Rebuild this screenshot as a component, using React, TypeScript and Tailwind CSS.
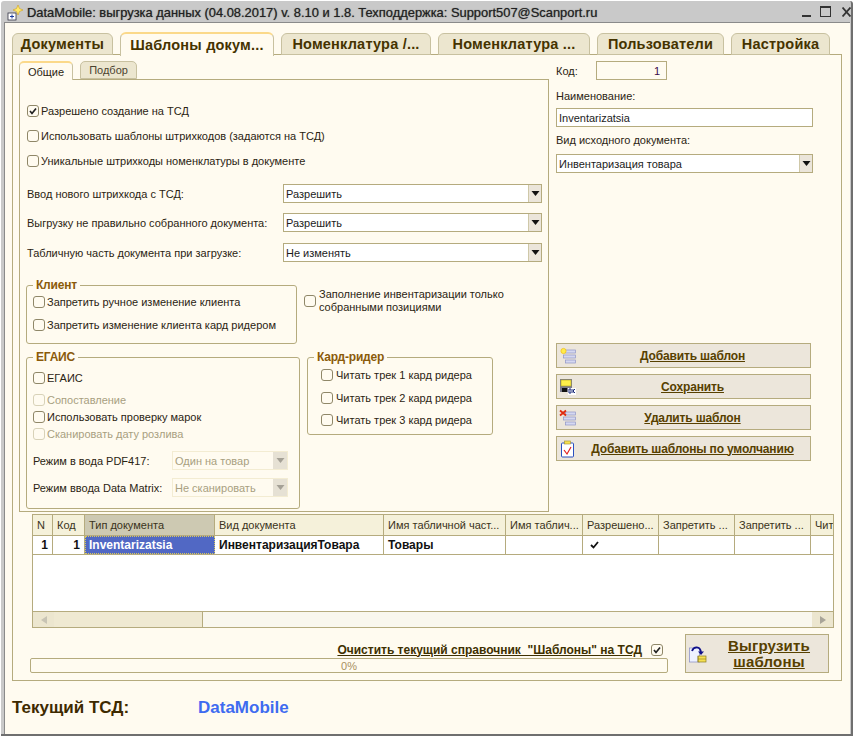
import type { ReactNode } from "react";

const tabs = [
  { label: "Документы", w: "w-[101px]" },
  { label: "Шаблоны докум...", w: "w-[154px]", active: true },
  { label: "Номенклатура /...", w: "w-[150px]" },
  { label: "Номенклатура ...", w: "w-[152px]" },
  { label: "Пользователи", w: "w-[127px]" },
  { label: "Настройка", w: "w-[99px]" },
];

const columns = [
  { title: "N", w: "w-[20px]" },
  { title: "Код", w: "w-[32px]" },
  { title: "Тип документа", w: "w-[130px]", sel: true },
  { title: "Вид документа", w: "w-[169px]" },
  { title: "Имя табличной част...", w: "w-[122px]" },
  { title: "Имя таблич...", w: "w-[77px]" },
  { title: "Разрешено...", w: "w-[76px]" },
  { title: "Запретить ...", w: "w-[76px]" },
  { title: "Запретить ...", w: "w-[76px]" },
  { title: "Чит", w: "w-[22px]" },
];

function Check({ on, off, label, gap = "ml-[2px]" }: { on?: boolean; off?: boolean; label?: ReactNode; gap?: string }) {
  return (
    <div className={`flex items-center ${off ? "text-[#a89f80]" : "text-[#2b2412]"}`}>
      <span className={`w-[12px] h-[12px] shrink-0 rounded-[3px] border bg-[#fffbf0] flex items-center justify-center ${off ? "border-[#d8d2b8]" : "border-[#8f8768]"}`}>
        {on && (
          <svg width="10" height="10" viewBox="0 0 10 10">
            <path d="M2 5 L4 7.5 L8 2.5" fill="none" stroke="#222" strokeWidth="1.7" />
          </svg>
        )}
      </span>
      {label && <span className={`${gap} whitespace-nowrap`}>{label}</span>}
    </div>
  );
}

function Arrow({ color = "#111" }: { color?: string }) {
  return (
    <svg width="9" height="5" viewBox="0 0 9 5">
      <path d="M0.5 0 H8.5 L4.5 5 Z" fill={color} />
    </svg>
  );
}

function Select({ value, w }: { value: string; w: string }) {
  return (
    <div className={`${w} h-[19px] border border-[#b5ab7e] bg-white flex items-center`}>
      <span className="flex-1 pl-[2px] text-[#1c1c1c] whitespace-nowrap">{value}</span>
      <span className="w-[13px] h-full bg-[#ebe5da] border-l border-[#cfc8a8] flex items-center justify-center">
        <Arrow />
      </span>
    </div>
  );
}

function Row({ label, value, className = "" }: { label: string; value: string; className?: string }) {
  return (
    <div className={`flex items-center h-[19px] pl-[7px] ${className}`}>
      <span className="w-[256px] text-[#2b2412] whitespace-nowrap">{label}</span>
      <Select value={value} w="w-[259px]" />
    </div>
  );
}

function DisabledSelect({ value }: { value: string }) {
  return (
    <div className="w-[116px] h-[19px] border border-[#f3ecd2] flex items-center">
      <span className="flex-1 pl-[2px] text-[#a89f80] whitespace-nowrap">{value}</span>
      <span className="w-[14px] h-full bg-[#e6e1d4] flex items-center justify-center">
        <Arrow color="#a5a196" />
      </span>
    </div>
  );
}

function Group({ title, className, children }: { title: string; className: string; children: ReactNode }) {
  return (
    <div className={`relative border border-[#b5ab7e] rounded-[3px] ${className}`}>
      <span className="absolute -top-[8px] left-[6px] px-[3px] bg-[#fffbf0] text-[12px] leading-[14px] font-bold text-[#8a5a0a] tracking-[-0.2px]">{title}</span>
      {children}
    </div>
  );
}

function ActionButton({ icon, label }: { icon: ReactNode; label: string }) {
  return (
    <div className="relative w-[255px] h-[25px] border border-[#b5ab7e] bg-[#ece6db] flex items-center justify-center">
      <span className="absolute left-[2px] top-[3px]">{icon}</span>
      <span className="pl-[18px] text-[12px] tracking-[-0.15px] font-bold underline text-[#574000] whitespace-nowrap">{label}</span>
    </div>
  );
}

function ListLines() {
  return (
    <g>
      <rect x="6.5" y="3" width="10" height="3" fill="#d5d8f0" stroke="#8f95c8" strokeWidth="0.7" />
      <rect x="4.5" y="8" width="12" height="3" fill="#d5d8f0" stroke="#8f95c8" strokeWidth="0.7" />
      <rect x="6.5" y="13" width="10" height="3" fill="#d5d8f0" stroke="#8f95c8" strokeWidth="0.7" />
    </g>
  );
}

function AddIcon() {
  return (
    <svg width="18" height="18" viewBox="0 0 18 18">
      <ListLines />
      <circle cx="4.5" cy="4" r="2.6" fill="#ffec4a" stroke="#f0c020" strokeWidth="0.8" />
    </svg>
  );
}

function SaveIcon() {
  return (
    <svg width="18" height="18" viewBox="0 0 18 18">
      <rect x="1" y="1" width="12" height="13" fill="#7c7c8c" />
      <rect x="2" y="2" width="10" height="6" fill="#fff04a" stroke="#b0a020" strokeWidth="0.6" />
      <rect x="3" y="10" width="5" height="4" fill="#111" />
      <rect x="9" y="10" width="8" height="7" fill="#fff" />
      <path d="M10 11h2v4h-2z M14 11v4 M16 11l-2 2 2 2" fill="none" stroke="#1a2a7a" strokeWidth="1" />
    </svg>
  );
}

function DeleteIcon() {
  return (
    <svg width="18" height="18" viewBox="0 0 18 18">
      <ListLines />
      <path d="M1 1.5 L7 6.5 M7 1.5 L1 6.5" stroke="#e02a10" strokeWidth="1.8" />
    </svg>
  );
}

function DefaultsIcon() {
  return (
    <svg width="18" height="18" viewBox="0 0 18 18">
      <rect x="2.5" y="3" width="12" height="14" rx="1" fill="#fff" stroke="#2a50c0" strokeWidth="1" />
      <rect x="5.5" y="1" width="6" height="3" fill="#f5e050" stroke="#a09030" strokeWidth="0.6" />
      <path d="M5 10 L8 14 L12 7" fill="none" stroke="#e02020" strokeWidth="1.2" />
    </svg>
  );
}

function UploadIcon() {
  return (
    <svg width="18" height="18" viewBox="0 0 18 18">
      <rect x="0.5" y="3" width="10" height="14" fill="#eef2ff" stroke="#8f95c8" strokeWidth="0.8" />
      <rect x="9" y="11" width="8" height="6" fill="#f5e050" stroke="#8a7a20" strokeWidth="0.7" />
      <path d="M9 11 V17 M9 14 H17" stroke="#8a7a20" strokeWidth="0.6" />
      <path d="M3 6 C5 1, 11 1, 12 7" fill="none" stroke="#10108a" strokeWidth="1.8" />
      <path d="M9 6.5 H15 L12 10 Z" fill="#10108a" />
    </svg>
  );
}

export default function App() {
  return (
    <div className="w-[855px] h-[737px] bg-white overflow-hidden text-[11px] leading-[14px] font-['Liberation_Sans',Arial,sans-serif]">
      <div className="w-[852px] h-[735px] ml-[1px] mt-[1px] bg-[#c9c9c9] border-r-2 border-b-2 border-r-[#6f6f6f] border-b-[#6f6f6f] flex flex-col rounded-t-[3px]">
        {/* title bar */}
        <div className="h-[21px] shrink-0 flex items-center pl-[5px] pt-[2px]">
          <svg width="18" height="18" viewBox="0 0 18 18" className="shrink-0">
            <rect x="2" y="9" width="8" height="7" fill="#fff" stroke="#334" strokeWidth="0.8" />
            <path d="M6 10.5 v4 M4 12.5 h4" stroke="#1a3aa0" strokeWidth="1" />
            <path d="M12 1 L13.5 4.5 L17 6 L13.5 7.5 L12 11 L10.5 7.5 L7 6 L10.5 4.5 Z" fill="#ffe96a" stroke="#d0a020" strokeWidth="0.6" />
          </svg>
          <span className="ml-[3px] text-[#222] whitespace-nowrap text-[12.9px] [text-shadow:0_0_1px_#555]">
            DataMobile: выгрузка данных (04.08.2017) v. 8.10 и 1.8. Техподдержка: Support507@Scanport.ru
          </span>
          <div className="ml-auto flex items-center gap-[9px] -mt-[2px]">
            <span className="w-[9px] h-[2px] bg-[#333] mt-[8px]" />
            <span className="w-[11px] h-[11px] border border-[#333] border-t-2" />
            <svg width="9" height="10" viewBox="0 0 9 10" className="ml-[2px]">
              <path d="M0.5 0.5 L8.5 9.5 M8.5 0.5 L0.5 9.5" stroke="#333" strokeWidth="1.8" />
            </svg>
          </div>
        </div>

        {/* window body */}
        <div className="flex-1 ml-[3px] mr-[1px] bg-[#fffbf0] flex flex-col border-l border-t border-[#8a8a8a] pl-[7px] pt-[9px]">
          <div className="flex gap-[7px] h-[23px] relative z-10">
            {tabs.map((t) => (
              <div
                key={t.label}
                className={`${t.w} rounded-t-[6px] border border-[#c8c1a0] text-[14.5px] font-bold tracking-[0.2px] text-[#453300] flex items-center justify-center whitespace-nowrap ${
                  t.active ? "h-[24px] bg-[#fffbf0] border-b-0 border-t-2 border-t-[#fbd98a]" : "h-[22px] mt-[1px] bg-[#ece6cf]"
                }`}
              >
                {t.label}
              </div>
            ))}
          </div>

          {/* outer panel */}
          <div className="w-[830px] h-[627px] border border-[#b5ab7e] -mt-[1px] flex flex-col">
            <div className="flex pl-[6px] pt-[6px]">
              {/* left column */}
              <div className="w-[530px] shrink-0">
                <div className="flex gap-[7px] h-[19px] relative z-10">
                  <div className="w-[54px] h-[19px] rounded-t-[5px] border border-[#c8c1a0] border-b-0 border-t-2 border-t-[#fbd98a] bg-[#fffbf0] flex items-center justify-center text-[#2b2412]">
                    Общие
                  </div>
                  <div className="w-[57px] h-[18px] rounded-t-[5px] border border-[#c8c1a0] bg-[#ece6cf] flex items-center justify-center text-[#4a4330]">
                    Подбор
                  </div>
                </div>
                <div className="h-[433px] border border-[#b5ab7e] -mt-px flex flex-col pt-[24px]">
                  <div className="pl-[7px] flex flex-col gap-[11px]">
                    <Check on label="Разрешено создание на ТСД" />
                    <Check label="Использовать шаблоны штрихкодов (задаются на ТСД)" />
                    <Check label="Уникальные штрихкоды номенклатуры в документе" />
                  </div>
                  <Row className="mt-[16px]" label="Ввод нового штрихкода с ТСД:" value="Разрешить" />
                  <Row className="mt-[10px]" label="Выгрузку не правильно собранного документа:" value="Разрешить" />
                  <Row className="mt-[11px]" label="Табличную часть документа при загрузке:" value="Не изменять" />

                  <div className="flex mt-[23px] pl-[6px] items-start">
                    <Group title="Клиент" className="w-[271px] h-[59px] pt-[9px] pl-[6px] flex flex-col gap-[9px]">
                      <Check label="Запретить ручное изменение клиента" />
                      <Check label="Запретить изменение клиента кард ридером" />
                    </Group>
                    <div className="ml-[7px] mt-[3px] flex items-center">
                      <Check />
                      <span className="ml-[3px] w-[205px] text-[#2b2412] leading-[13px]">
                        Заполнение инвентаризации только собранными позициями
                      </span>
                    </div>
                  </div>

                  <div className="flex mt-[13px] pl-[6px] items-start">
                    <Group title="ЕГАИС" className="w-[274px] h-[152px] pl-[6px] pt-[13px] flex flex-col">
                      <Check label="ЕГАИС" />
                      <div className="mt-[8px]">
                        <Check off label="Сопоставление" />
                      </div>
                      <div className="mt-[3px]">
                        <Check label="Использовать проверку марок" />
                      </div>
                      <div className="mt-[3px]">
                        <Check off label="Сканировать дату розлива" />
                      </div>
                      <div className="flex items-center mt-[10px] text-[#2b2412]">
                        <span className="w-[139px] whitespace-nowrap">Режим в вода PDF417:</span>
                        <DisabledSelect value="Один на товар" />
                      </div>
                      <div className="flex items-center mt-[8px] text-[#2b2412]">
                        <span className="w-[139px] whitespace-nowrap">Режим ввода Data Matrix:</span>
                        <DisabledSelect value="Не сканировать" />
                      </div>
                    </Group>
                    <Group title="Кард-ридер" className="w-[186px] h-[78px] ml-[7px] pl-[13px] pt-[10px] flex flex-col">
                      <Check gap="ml-[3px]" label="Читать трек 1 кард ридера" />
                      <div className="mt-[9px]">
                        <Check gap="ml-[3px]" label="Читать трек 2 кард ридера" />
                      </div>
                      <div className="mt-[8px]">
                        <Check gap="ml-[3px]" label="Читать трек 3 кард ридера" />
                      </div>
                    </Group>
                  </div>
                </div>
              </div>

              {/* right column */}
              <div className="ml-[7px] w-[257px] flex flex-col text-[#2b2412]">
                <div className="flex items-center h-[19px]">
                  <span className="w-[40px]">Код:</span>
                  <div className="w-[71px] h-[19px] border border-[#b5ab7e] flex items-center justify-end pr-[6px] text-[#3a0a4a]">1</div>
                </div>
                <div className="mt-[9px]">Наименование:</div>
                <div className="mt-[5px] w-[257px] h-[19px] border border-[#b5ab7e] bg-white flex items-center pl-[2px] text-[#1c1c1c]">
                  Inventarizatsia
                </div>
                <div className="mt-[6px]">Вид исходного документа:</div>
                <div className="mt-[7px]">
                  <Select value="Инвентаризация товара" w="w-[257px]" />
                </div>
                <div className="mt-[170px] flex flex-col gap-[6px]">
                  <ActionButton icon={<AddIcon />} label="Добавить шаблон" />
                  <ActionButton icon={<SaveIcon />} label="Сохранить" />
                  <ActionButton icon={<DeleteIcon />} label="Удалить шаблон" />
                  <ActionButton icon={<DefaultsIcon />} label="Добавить шаблоны по умолчанию" />
                </div>
              </div>
            </div>

            {/* table */}
            <div className="ml-[19px] mt-[2px] w-[802px] h-[114px] border border-[#b5ab7e] bg-white flex flex-col">
              <div className="flex h-[21px] bg-[#f5f1da] border-b border-[#b5ab7e] shrink-0 overflow-hidden">
                {columns.map((c, i) => (
                  <div
                    key={i}
                    className={`${c.w} shrink-0 border-r border-[#b5ab7e] last:border-r-0 flex items-center pl-[4px] text-[#3a3320] whitespace-nowrap ${c.sel ? "bg-[#cdc9b2]" : ""}`}
                  >
                    {c.title}
                  </div>
                ))}
              </div>
              <div className="flex h-[19px] border-b border-[#b5ab7e] shrink-0 text-[12px] font-bold text-[#111] overflow-hidden">
                <div className="w-[20px] shrink-0 border-r border-[#b5ab7e] flex items-center justify-end pr-[4px]">1</div>
                <div className="w-[32px] shrink-0 border-r border-[#b5ab7e] flex items-center justify-end pr-[4px]">1</div>
                <div className="w-[130px] shrink-0 bg-[#5168c4] text-white flex items-center pl-[3px] border border-dotted border-[#d8c860]">Inventarizatsia</div>
                <div className="w-[169px] shrink-0 border-r border-[#b5ab7e] flex items-center pl-[4px]">ИнвентаризацияТовара</div>
                <div className="w-[122px] shrink-0 border-r border-[#b5ab7e] flex items-center pl-[4px]">Товары</div>
                <div className="w-[77px] shrink-0 border-r border-[#b5ab7e]" />
                <div className="w-[76px] shrink-0 border-r border-[#b5ab7e] flex items-center pl-[7px]">
                  <svg width="9" height="8" viewBox="0 0 9 8">
                    <path d="M1 4 L3.5 6.5 L8 1" fill="none" stroke="#111" strokeWidth="1.8" />
                  </svg>
                </div>
                <div className="w-[76px] shrink-0 border-r border-[#b5ab7e]" />
                <div className="w-[76px] shrink-0 border-r border-[#b5ab7e]" />
              </div>
              <div className="flex-1" />
              <div className="h-[16px] shrink-0 border-t border-[#b5ab7e] bg-[#f9f7ee] flex items-stretch">
                <div className="w-[21px] bg-[#ece6cf] flex items-center justify-center">
                  <span className="w-0 h-0 border-y-[4px] border-y-transparent border-r-[6px] border-r-[#c8c4b4]" />
                </div>
                <div className="w-[149px] bg-[#efe9d2] border-r border-[#b5ab7e]" />
                <div className="flex-1" />
                <div className="w-[21px] bg-[#ece6cf] flex items-center justify-center">
                  <span className="w-0 h-0 border-y-[4px] border-y-transparent border-l-[6px] border-l-[#a8a498]" />
                </div>
              </div>
            </div>

            {/* footer of panel */}
            <div className="flex mt-[6px] pl-[17px]">
              <div className="w-[638px] shrink-0 flex flex-col">
                <div className="flex items-center justify-end h-[17px] mt-[7px] pr-[5px]">
                  <span className="text-[12px] font-bold underline text-[#3e3000] whitespace-nowrap">
                    Очистить текущий справочник&nbsp; "Шаблоны" на ТСД
                  </span>
                  <span className="ml-[9px]">
                    <Check on />
                  </span>
                </div>
                <div className="h-[15px] border border-[#b5ab7e] rounded-[2px] flex items-center justify-center text-[#a89060]">
                  0%
                </div>
              </div>
              <div className="relative ml-[17px] w-[144px] h-[39px] border border-[#b5ab7e] bg-[#ece6db] flex items-center justify-center pl-[24px] text-[15px] leading-[16px] font-bold underline text-[#574000] text-center tracking-[0.2px]">
                <span className="absolute left-[3px] top-[10px]"><UploadIcon /></span>
                Выгрузить<br />шаблоны
              </div>
            </div>
          </div>

          {/* current terminal */}
          <div className="flex items-center mt-[17px] text-[17px] leading-[20px] font-bold">
            <span className="w-[186px] text-[#3e2a00] whitespace-nowrap">Текущий ТСД:</span>
            <span className="text-[#3e6bf0]">DataMobile</span>
          </div>
        </div>
      </div>
    </div>
  );
}
